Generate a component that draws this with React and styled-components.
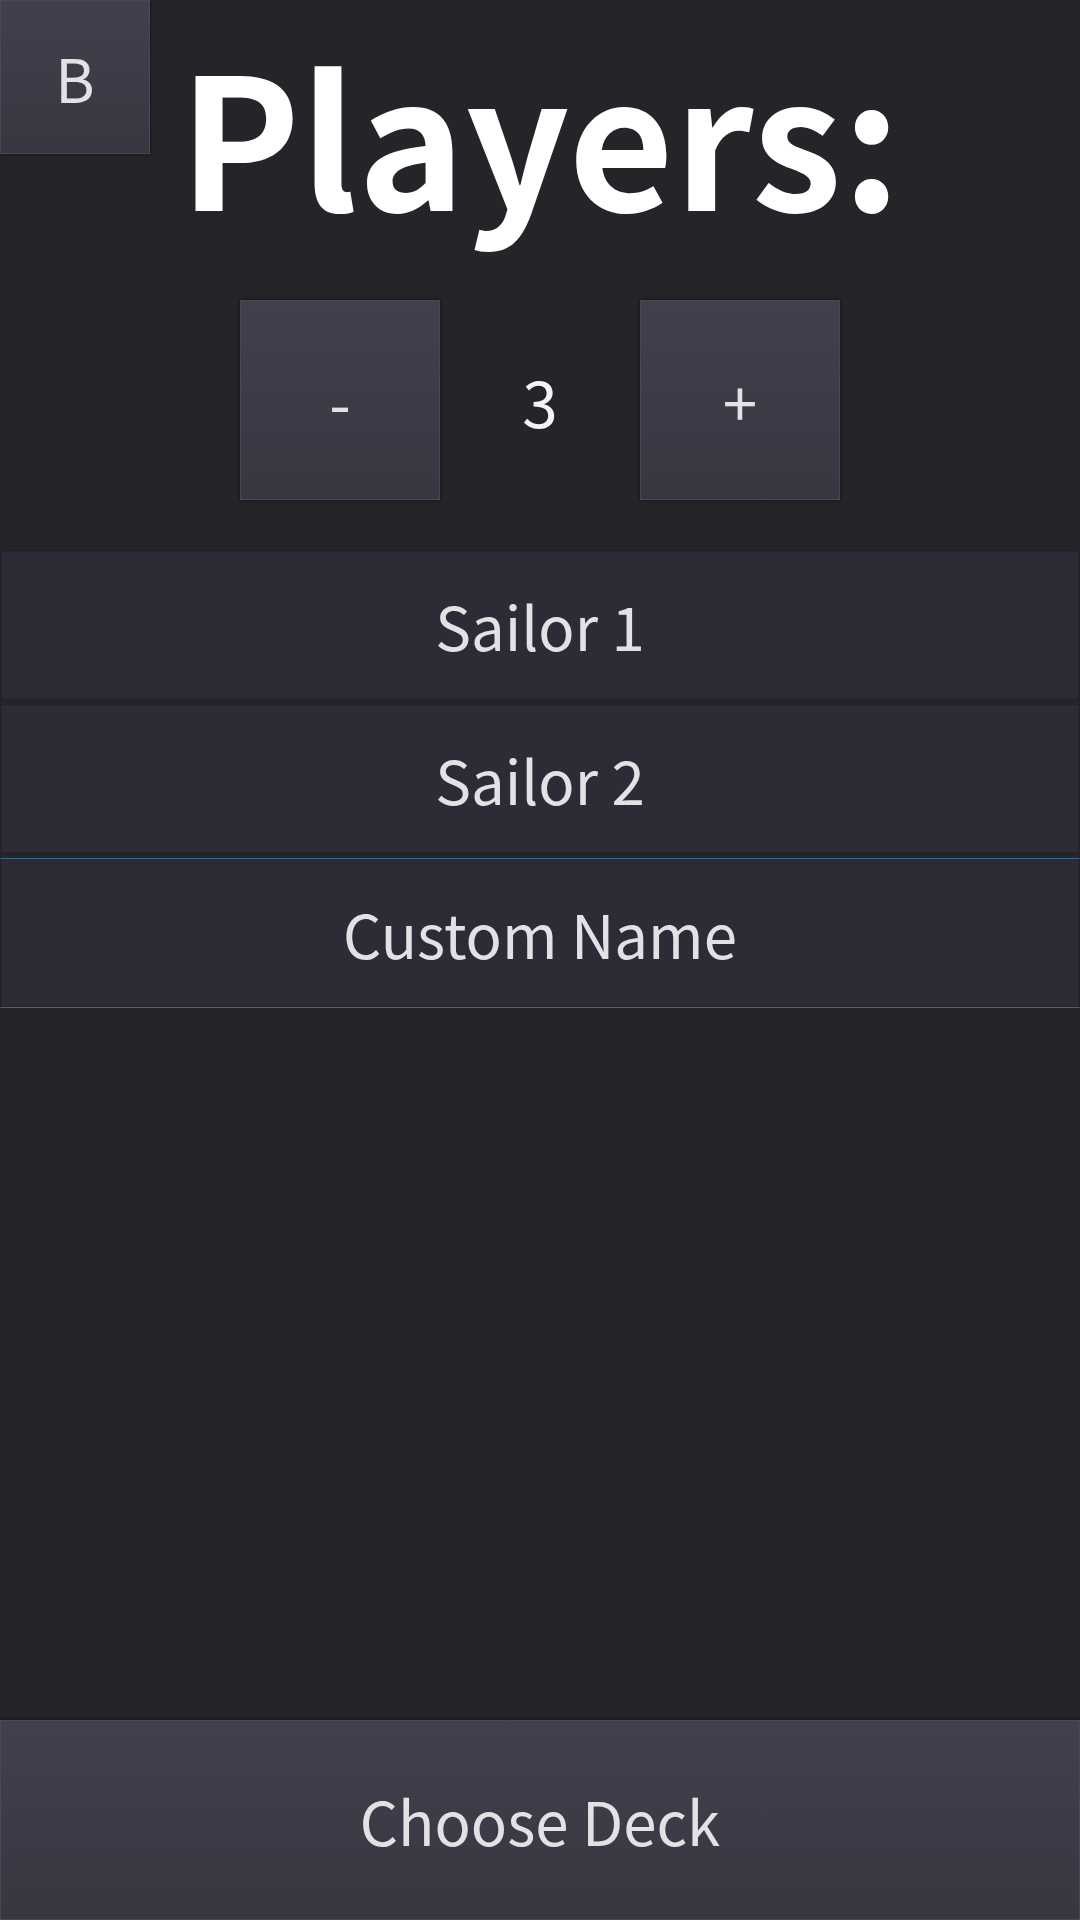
import React, { useState } from "react";
import styled, { createGlobalStyle } from "styled-components";

const FONT = `"Noto Sans CJK SC", "Source Sans Pro", "Noto Sans", sans-serif`;

const Global = createGlobalStyle`
  html, body { margin: 0; padding: 0; background: #252429; }
  body { font-family: ${FONT}; color: #e2e2e4; }
  * { box-sizing: border-box; }
`;

const Screen = styled.div`
  width: 1080px;
  height: 1920px;
  display: flex;
  flex-direction: column;
  background: #252429;
  overflow: hidden;
`;

const Header = styled.header`
  position: relative;
  height: 300px;
  display: flex;
  justify-content: center;
`;

const Title = styled.h1`
  margin: 0;
  font-family: ${FONT};
  font-weight: 700;
  font-size: 182px;
  line-height: 264px;
  color: #ffffff;
  letter-spacing: 0;
`;

const RaisedButton = styled.button`
  font-family: ${FONT};
  font-weight: 400;
  color: #e2e2e4;
  background: linear-gradient(to bottom, #42404c 0%, #383641 100%);
  border: 1px solid #4a4854;
  box-shadow: 0 0 3px rgba(0, 0, 0, 0.55);
  padding: 0;
  display: flex;
  align-items: center;
  justify-content: center;
  cursor: pointer;
`;

const BackButton = styled(RaisedButton)`
  position: absolute;
  top: 0;
  left: 0;
  width: 150px;
  height: 154px;
  font-size: 60px;
  line-height: 1;
`;

const CounterRow = styled.div`
  display: flex;
  justify-content: center;
  align-items: center;
  height: 200px;
  margin-bottom: 50px;
`;

const StepButton = styled(RaisedButton)`
  width: 200px;
  height: 200px;
  font-size: 62px;
  line-height: 1;
`;

const Count = styled.div`
  width: 200px;
  text-align: center;
  font-size: 64px;
  color: #f4f4f6;
  line-height: 1;
`;

const List = styled.div`
  display: flex;
  flex-direction: column;
  gap: 4px;
`;

const NameRow = styled.div`
  height: 150px;
  display: flex;
  align-items: center;
  justify-content: center;
  background: #2d2c36;
  border: 1px solid #222127;
  border-top-color: ${(p) => (p.$focused ? "#3d6b87" : "#222127")};
  border-bottom-color: ${(p) => (p.$focused ? "#3d6b87" : "#222127")};
  box-shadow: inset 0 0 2px rgba(0, 0, 0, 0.35);
  font-size: 60px;
  color: #e2e2e4;
  line-height: 1;
`;

const Spacer = styled.div`
  flex: 1;
`;

const FooterButton = styled(RaisedButton)`
  width: 100%;
  height: 200px;
  font-size: 60px;
  line-height: 1;
  box-shadow: 0 -1px 3px rgba(0, 0, 0, 0.5);
`;

export default function App() {
  const [count, setCount] = useState(3);
  const names = ["Sailor 1", "Sailor 2", "Custom Name"];
  return (
    <>
      <Global />
      <Screen>
        <Header>
          <BackButton>B</BackButton>
          <Title>Players:</Title>
        </Header>
        <CounterRow>
          <StepButton onClick={() => setCount((c) => Math.max(1, c - 1))}>-</StepButton>
          <Count>{count}</Count>
          <StepButton onClick={() => setCount((c) => c + 1)}>+</StepButton>
        </CounterRow>
        <List>
          {names.map((n, i) => (
            <NameRow key={n} $focused={i === 2}>
              {n}
            </NameRow>
          ))}
        </List>
        <Spacer />
        <FooterButton>Choose Deck</FooterButton>
      </Screen>
    </>
  );
}
